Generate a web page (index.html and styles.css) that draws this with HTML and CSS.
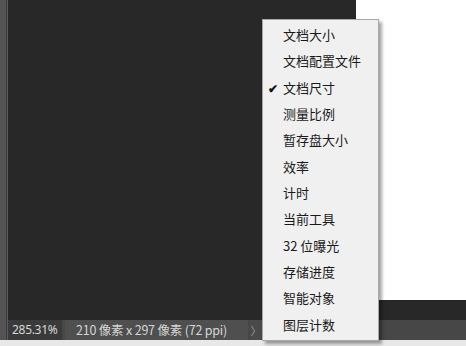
FILE: index.html
```html
<!DOCTYPE html>
<html lang="zh-CN">
<head>
  <meta charset="UTF-8">
  <meta name="viewport" content="width=device-width, initial-scale=1.0">
  <title>文档尺寸</title>
  <link rel="stylesheet" href="styles.css">
</head>
<body>
  <div class="app">
    <div class="main">
      <div class="edge"></div>
      <div class="work">
        <div class="canvas">
          <div class="doc"></div>
        </div>
        <div class="statusbar">
          <span class="zoom">285.31%</span>
          <span class="info">210 像素 x 297 像素 (72 ppi)</span>
          <span class="more">〉</span>
        </div>
      </div>
    </div>
    <div class="footer"></div>

    <!-- status bar popup -->
    <ul class="menu">
      <li>文档大小</li>
      <li>文档配置文件</li>
      <li class="checked">文档尺寸</li>
      <li>测量比例</li>
      <li>暂存盘大小</li>
      <li>效率</li>
      <li>计时</li>
      <li>当前工具</li>
      <li>32 位曝光</li>
      <li>存储进度</li>
      <li>智能对象</li>
      <li>图层计数</li>
    </ul>
  </div>
</body>
</html>
```

FILE: styles.css
```css
body {
  margin: 0;
  background: #282828;
  font-family: "Noto Sans CJK SC", "Noto Sans", sans-serif;
}

.app {
  position: relative;
  width: 466px;
  height: 346px;
  display: flex;
  flex-direction: column;
  overflow: hidden;
}

.main {
  flex: 1;
  display: flex;
}

.edge {
  width: 6px;
  background: #545454;
  border-right: 1px solid #3a3a3a;
  margin-right: 1px;
  box-shadow: 1px 0 0 #5c5c5c;
}

.work {
  flex: 1;
  display: flex;
  flex-direction: column;
  background: #282828;
}

.canvas {
  flex: 1;
  display: flex;
  justify-content: flex-end;
  align-items: flex-start;
}

.doc {
  width: 110px;
  height: 300px;
  background: #fff;
}

.statusbar {
  height: 20px;
  display: flex;
  align-items: stretch;
  background: #474747;
  color: #d6d6d6;
  font-size: 12.5px;
  line-height: 20px;
}

.zoom {
  width: 50px;
  padding-left: 4px;
  background: #3a3a3a;
  margin-right: 3px;
  font-family: "Noto Sans", sans-serif;
  font-size: 12px;
  letter-spacing: -0.3px;
}

.info {
  width: 172px;
  padding-left: 11px;
  background: #4f4f4f;
  margin-right: 2px;
  letter-spacing: -0.2px;
}

.more {
  width: 12px;
  text-align: center;
  background: #4a4a4a;
  color: #9a9a9a;
  font-size: 11px;
}

.footer {
  height: 6px;
  background: #e8e8e8;
}

.menu {
  position: absolute;
  left: 262px;
  top: 19px;
  width: 115px;
  margin: 0;
  padding: 2px 0;
  list-style: none;
  background: #f0f0f0;
  border: 1px solid #a8a8a8;
  box-shadow: 3px 3px 3px rgba(0, 0, 0, 0.35);
}

.menu li {
  position: relative;
  height: 26.33px;
  line-height: 26px;
  padding-left: 20px;
  font-size: 13px;
  color: #1a1a1a;
}

.menu li.checked::before {
  content: "✔";
  position: absolute;
  left: 5px;
  font-size: 12px;
  font-weight: bold;
  color: #111;
}
```
